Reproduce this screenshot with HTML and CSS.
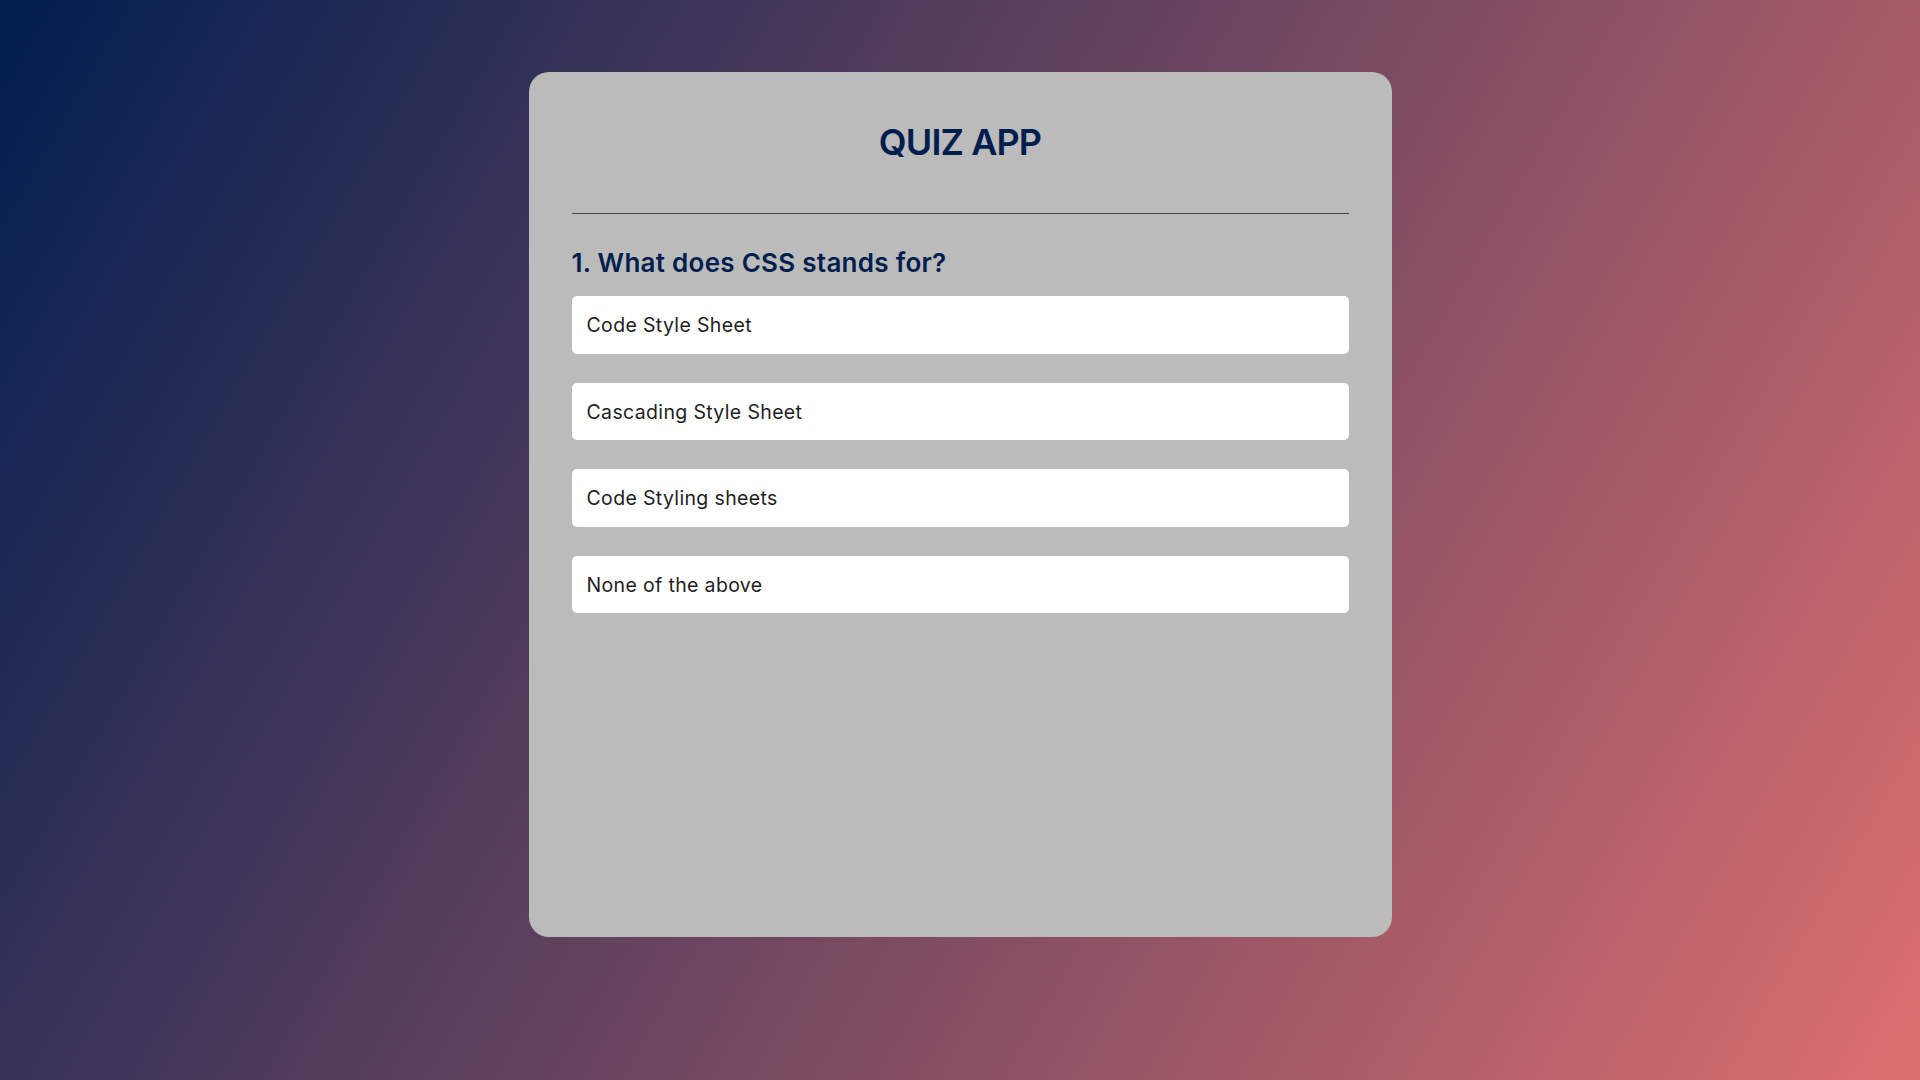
FILE: index.html
```html
<!DOCTYPE html>
<html lang="en">
<head>
<meta charset="UTF-8">
<title>Quiz App</title>
<link rel="stylesheet" href="styles.css">
</head>
<body>
  <main class="app">
    <h1 class="app-title">QUIZ APP</h1>
    <hr class="divider">
    <div class="quiz">
      <h2 class="question">1. What does CSS stands for?</h2>
      <div class="answers">
        <button class="answer">Code Style Sheet</button>
        <button class="answer">Cascading Style Sheet</button>
        <button class="answer">Code Styling sheets</button>
        <button class="answer">None of the above</button>
      </div>
    </div>
  </main>
</body>
</html>
```

FILE: styles.css
```css
* {
  box-sizing: border-box;
}

html, body {
  margin: 0;
  padding: 0;
}

body {
  min-height: 100vh;
  font-family: Inter, "Open Sans", sans-serif;
  background: linear-gradient(120deg, #001e50 0%, #dc6f6f 100%);
  padding-top: 72px;
}

.app {
  width: 863px;
  height: 865px;
  margin: 0 auto;
  background: #bbbbbb;
  border-radius: 20px;
  padding: 48px 43px 0;
}

.app-title {
  margin: 0;
  font-size: 36px;
  line-height: 44px;
  font-weight: 600;
  letter-spacing: -0.9px;
  color: #001e4d;
  text-align: center;
}

.divider {
  margin: 49px 0 0;
  border: 0;
  border-top: 1px solid #444;
  height: 0;
}

.question {
  margin: 32px 0 16px;
  font-size: 26px;
  line-height: 34px;
  font-weight: 600;
  letter-spacing: 0.27px;
  color: #001e4d;
}

.answers {
  display: flex;
  flex-direction: column;
  gap: 29px;
}

.answer {
  display: flex;
  align-items: center;
  height: 57.5px;
  width: 100%;
  border: 0;
  border-radius: 5px;
  background: #ffffff;
  padding: 1px 15px 0;
  font-family: inherit;
  font-size: 19.5px;
  font-weight: 400;
  letter-spacing: 0.35px;
  color: #1e1e1e;
  text-align: left;
  cursor: pointer;
}
```
